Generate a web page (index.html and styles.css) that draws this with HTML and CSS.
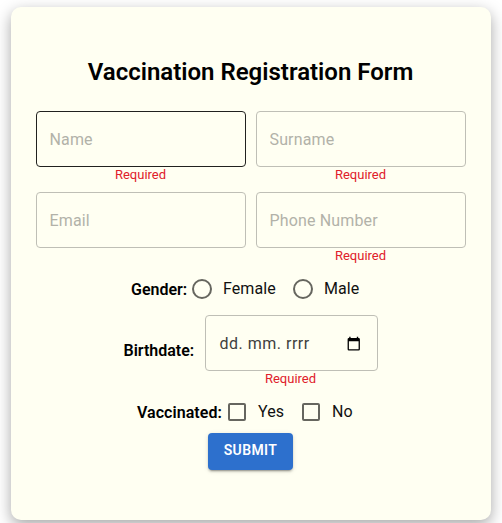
FILE: index.html
```
<!DOCTYPE html>
<html lang="en">
<head>
<meta charset="utf-8">
<title>Vaccination Registration Form</title>
<link rel="stylesheet" href="styles.css">
</head>
<body>
<form class="card">
  <h1 class="title">Vaccination Registration Form</h1>
  <div class="fields">
    <div class="field"><input class="input active" type="text" placeholder="Name"><span class="error">Required</span></div>
    <div class="field"><input class="input" type="text" placeholder="Surname"><span class="error">Required</span></div>
    <div class="field"><input class="input" type="text" placeholder="Email"></div>
    <div class="field"><input class="input" type="text" placeholder="Phone Number"><span class="error">Required</span></div>
  </div>
  <div class="row gender">
    <b class="legend">Gender:</b>
    <label class="option"><span class="radio"></span>Female</label>
    <label class="option"><span class="radio"></span>Male</label>
  </div>
  <div class="row birth">
    <b class="legend">Birthdate:</b>
    <div class="field">
      <div class="date">
        <span class="mask">dd. mm. rrrr</span>
        <svg class="calendar" width="14" height="16" viewBox="0 0 14 16"><path fill-rule="evenodd" d="M2.2 .7h1.4V2h6.2V.7h1.4V2h.4a1.3 1.3 0 0 1 1.3 1.3v9.900a1.3 1.3 0 0 1-1.3 1.3H1.900A1.3 1.3 0 0 1 .6 13.200V3.300A1.3 1.3 0 0 1 1.900 2h.3zM1.900 5.300v7.900h9.700V5.300z"/></svg>
      </div>
      <span class="error">Required</span>
    </div>
  </div>
  <div class="row vaccinated">
    <b class="legend">Vaccinated:</b>
    <label class="option"><span class="check"></span>Yes</label>
    <label class="option"><span class="check"></span>No</label>
  </div>
  <button class="submit" type="button">Submit</button>
</form>
</body>
</html>
```
FILE: styles.css
```
* { box-sizing: border-box; }
html { overflow: hidden; }
body {
  margin: 0;
  padding: 7px 11px 0;
  height: 523px;
  overflow: hidden;
  background: #fff;
  font: 400 16px/24px Roboto, sans-serif;
  color: #000;
}
.card {
  width: 480px;
  height: 513px;
  padding: 51px 25px 0;
  background: #fffff2;
  border-radius: 10px;
  box-shadow: 0 5px 15px rgba(0, 0, 0, .35);
  display: flex;
  flex-direction: column;
  align-items: center;
}
.title {
  margin: 0 1px 25px 0;
  font-size: 24px;
  line-height: 28px;
  font-weight: 600;
  white-space: nowrap;
}
.fields {
  display: grid;
  grid-template-columns: 210px 210px;
  grid-auto-rows: 81px;
  column-gap: 10px;
}
.field {
  display: flex;
  flex-direction: column;
  align-items: center;
}
.input {
  width: 210px;
  height: 56px;
  padding: 0 13px 0 12.500px;
  border: 1px solid #bfbfb6;
  border-radius: 4px;
  background: transparent;
  font: 400 16px Roboto, sans-serif;
  letter-spacing: .15px;
  outline: none;
}
.input.active { border-color: #21211f; }
.input::placeholder { color: #b2b2a9; opacity: 1; }
.error {
  color: #e0202a;
  font-size: 13px;
  line-height: 15px;
  margin-right: 1px;
}
.row { display: flex; }
.legend { font-weight: 600; }
.option {
  display: flex;
  align-items: center;
  letter-spacing: .1px;
  color: #111;
}
.gender { margin-top: 4px; height: 24px; width: 330px; padding-left: 45px; }
.gender .legend { width: 61px; padding-top: 1px; }
.radio {
  width: 20px;
  height: 20px;
  margin-right: 11px;
  border: 2px solid #66665f;
  border-radius: 50%;
}
.gender .option:nth-of-type(1) { width: 101px; }
.gender .option { white-space: nowrap; }
.birth { margin: 14px 1px 0 0; gap: 10px; height: 71px; }
.birth .legend { width: 71px; padding-top: 24px; }
.date {
  width: 173px;
  height: 56px;
  padding: 1px 16px 0 14px;
  border: 1px solid #bfbfb6;
  border-radius: 4px;
  display: flex;
  align-items: center;
  justify-content: space-between;
}
.mask { color: #40403e; letter-spacing: .5px; padding-top: 1px; }
.vaccinated { margin-top: 14px; height: 24px; width: 228px; }
.vaccinated .legend { padding-top: 1px; width: 91px; letter-spacing: .05px; }
.check {
  width: 18px;
  height: 18px;
  margin-right: 12px;
  border: 2px solid #66665f;
  border-radius: 2px;
}
.vaccinated .option:nth-of-type(1) { width: 74px; }
.submit {
  margin: 9px 1px 0 0;
  width: 85px;
  height: 37px;
  padding: 0 0 3px;
  border: 0;
  border-radius: 4px;
  background: #2d70cd;
  color: #fff;
  font: 600 14px/24px Roboto, sans-serif;
  letter-spacing: .4px;
  text-transform: uppercase;
  box-shadow: 0 3px 1px -2px rgba(0,0,0,.2), 0 2px 2px rgba(0,0,0,.14), 0 1px 5px rgba(0,0,0,.12);
}
```
